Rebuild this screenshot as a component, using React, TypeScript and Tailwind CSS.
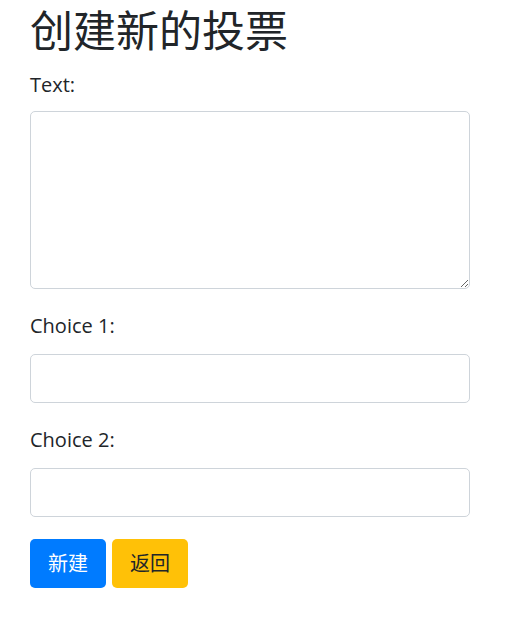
const font = '"Open Sans", "Noto Sans CJK SC", sans-serif';

function Field({ label }: { label: string }) {
  return (
    <div className="mb-[22px]">
      <label className="block text-[20px] leading-[30px] mb-[13px] text-[#212529]">{label}</label>
      <input type="text" className="block w-full h-[49px] rounded-[5px] border border-[#ced4da] bg-white outline-none" />
    </div>
  );
}

export default function App() {
  return (
    <div className="min-h-screen bg-white" style={{ fontFamily: font }}>
      <div className="ml-[30px] w-[440px] pt-[1px]">
        <h1 className="text-[43px] leading-[60px] font-normal text-[#212529] mb-[9px]">创建新的投票</h1>
        <form onSubmit={e => e.preventDefault()}>
          <div className="mb-[22px]">
            <label className="block text-[20px] leading-[30px] mb-[11px] text-[#212529]">Text:</label>
            <textarea className="block w-full h-[178px] rounded-[5px] border border-[#ced4da] bg-white outline-none" />
          </div>
          <Field label="Choice 1:" />
          <Field label="Choice 2:" />
          <div className="flex gap-[6px]">
            <button className="w-[76px] h-[49px] rounded-[5px] bg-[#007bff] text-white text-[20px]">新建</button>
            <button className="w-[76px] h-[49px] rounded-[5px] bg-[#ffc107] text-[#212529] text-[20px]">返回</button>
          </div>
        </form>
      </div>
    </div>
  );
}
